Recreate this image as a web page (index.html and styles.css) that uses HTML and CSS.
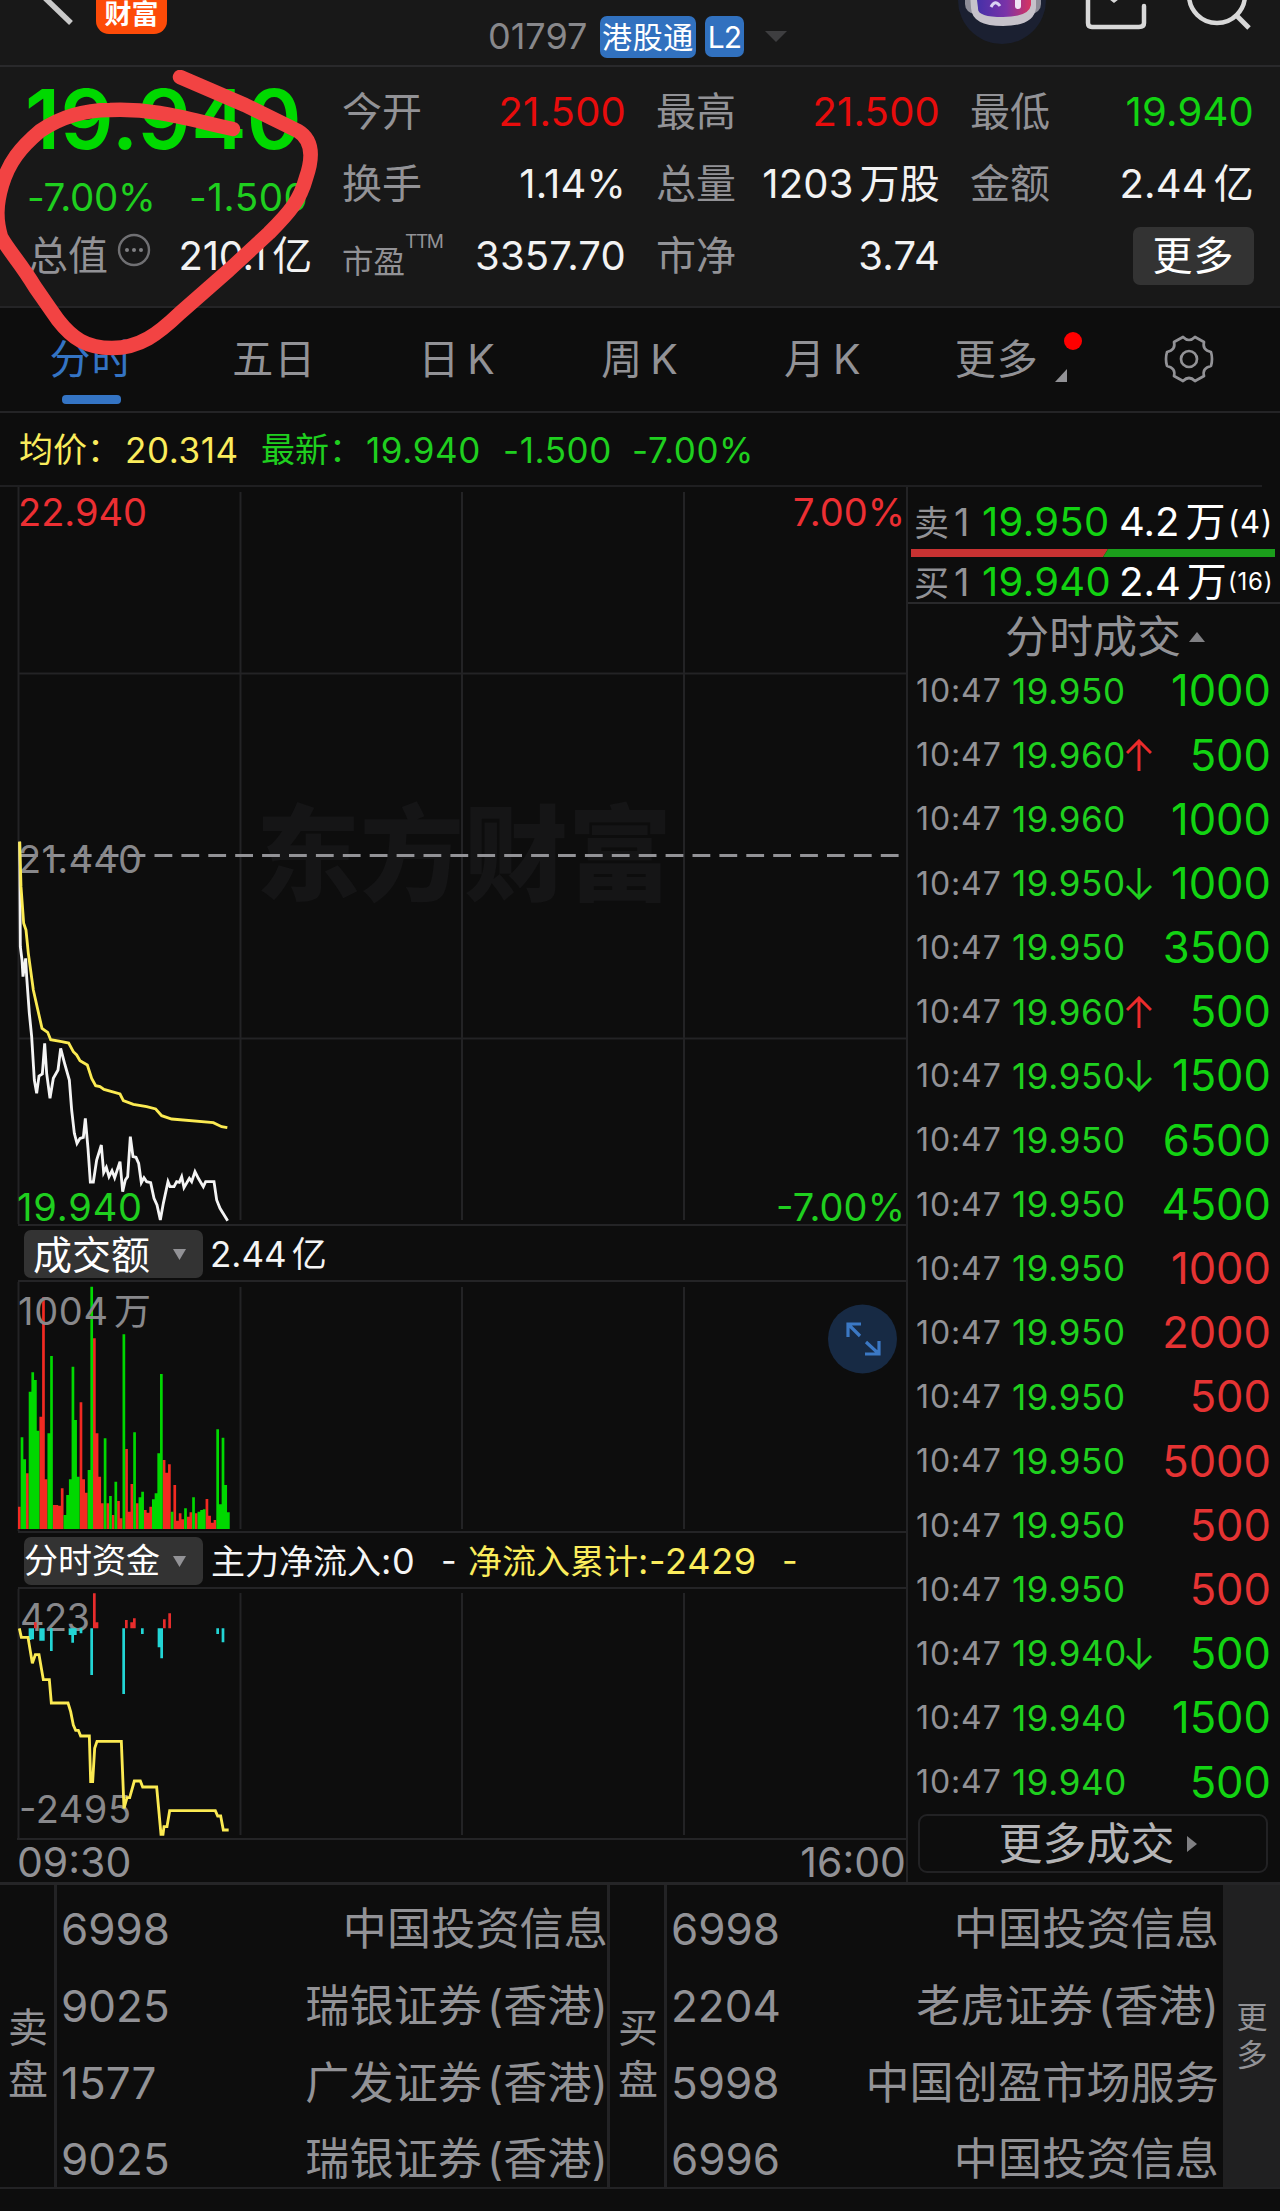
FILE: index.html
```html
<!DOCTYPE html>
<html lang="zh-CN">
<head>
<meta charset="utf-8">
<title>01797 分时</title>
<link rel="stylesheet" href="styles.css">
</head>
<body>
<div class="page">
  <header class="header">
    <svg class="back" width="96" height="66" viewBox="0 0 96 66"><path d="M45-2 71 23" stroke="#c9c9c9" stroke-width="5.5" fill="none"/></svg>
    <div class="logo">财富</div>
    <div class="code">01797</div>
    <div class="badge badge-hk">港股通</div>
    <div class="badge badge-l2">L2</div>
    <svg class="caret" width="22" height="11" viewBox="0 0 22 11"><path d="M0 0H22L11 11Z" fill="#3e3e40"/></svg>
    <svg class="tools" width="330" height="66" viewBox="950 0 330 66">
      <defs><linearGradient id="visor" x1="0" x2="1"><stop offset="0" stop-color="#4330a8"/><stop offset=".55" stop-color="#7a33a8"/><stop offset="1" stop-color="#d83460"/></linearGradient></defs>
      <circle cx="1002" cy="0" r="44" fill="#1b2031"/>
      <rect x="965" y="-14" width="76" height="28" rx="10" fill="#8d8d98"/>
      <path d="M970-8H1036V8Q1034 26 1003 26T971 8Z" fill="#c6c2ca"/>
      <path d="M976-8H1031V5Q1029 17 1003 17T978 8Z" fill="url(#visor)"/>
      <path d="M991 7Q995-1 1000 6" stroke="#d9d4f4" stroke-width="3" fill="none"/>
      <path d="M1018-2V6" stroke="#efe4f4" stroke-width="6" stroke-linecap="round"/>
      <path d="M1088-2V23Q1088 27 1092 27H1139Q1144 27 1144 23V6" stroke="#d8d8d8" stroke-width="4.5" stroke-linecap="round" fill="none"/>
      <path d="M1110-2 1114 1 1118-2" stroke="#d8d8d8" stroke-width="3" fill="none"/>
      <circle cx="1217" cy="-5" r="28" stroke="#d8d8d8" stroke-width="4.5" fill="none"/>
      <path d="M1236 15 1249 28" stroke="#d8d8d8" stroke-width="5"/>
    </svg>
  </header>

  <section class="quote">
    <div class="quote-main">
      <div class="last">19.940</div>
      <div class="change"><span>-7.00%</span><span>-1.500</span></div>
      <div class="cap">
        <span class="label">总值</span>
        <svg width="34" height="34" viewBox="0 0 34 34"><circle cx="17" cy="17" r="15" fill="none" stroke="#707073" stroke-width="2.4"/><g fill="#808083"><circle cx="10" cy="17" r="2"/><circle cx="17" cy="17" r="2"/><circle cx="24" cy="17" r="2"/></g></svg>
        <span class="value">210.1<i></i>亿</span>
      </div>
    </div>
    <dl class="stats">
      <div><dt>今开</dt><dd class="red">21.500</dd></div>
      <div><dt>最高</dt><dd class="red">21.500</dd></div>
      <div><dt>最低</dt><dd class="green">19.940</dd></div>
      <div><dt>换手</dt><dd>1.14%</dd></div>
      <div><dt>总量</dt><dd>1203<i></i>万股</dd></div>
      <div><dt>金额</dt><dd>2.44<i></i>亿</dd></div>
      <div><dt class="pe">市盈<sup>TTM</sup></dt><dd>3357.70</dd></div>
      <div><dt>市净</dt><dd>3.74</dd></div>
      <div class="more-cell"><button class="more">更多</button></div>
    </dl>
    <svg class="scribble" width="330" height="300" viewBox="0 70 330 300"><path d="M180 77 L245 105 298 131C313 140 313 158 306 178C300 200 290 212 269 233L229 270 180 313C158 334 140 348 112 348C86 348 72 338 58 320C48 306 42 297 35 287C20 262 8 250 1 237C-4 220-4 205 2 185C9 162 20 148 40 131C62 116 84 110 110 110C158 108 190 120 233 129" fill="none" stroke="#f24343" stroke-width="14.5" stroke-linecap="round" stroke-linejoin="round"/></svg>
  </section>

  <nav class="tabs">
    <a class="active">分时</a><a>五日</a><a>日<i></i>K</a><a>周<i></i>K</a><a>月<i></i>K</a>
    <a class="tab-more">更多<svg width="44" height="54" viewBox="0 0 44 54"><circle cx="34" cy="9" r="9" fill="#f00"/><path d="M28 37V50H16Z" fill="#929296"/></svg></a>
    <a><svg width="52" height="52" viewBox="0 0 52 52" fill="none" stroke="#929296" stroke-width="2.7" stroke-linejoin="round"><circle cx="26" cy="26" r="8"/><path d="M20 4Q26 10 32 4L41 9Q39 17 48 19Q50 26 48 33Q39 35 41 43L32 48Q26 42 20 48L11 43Q13 35 4 33Q2 26 4 19Q13 17 11 9Z"/></svg></a>
  </nav>

  <div class="summary"><span class="avg">均价：</span><span class="avg n">20.314</span><span>最新：</span><span class="n">19.940</span><span class="n">-1.500</span><span class="n">-7.00%</span></div>

  <main class="board">
    <div class="charts">
      <svg class="chart" width="906" height="737" viewBox="0 487 906 737">
        <text class="mark" x="256" y="893" textLength="416">东方财富</text>
        <g class="grid">
          <path d="M18.5 487V1224M240.5 492V1220M462 492V1220M684 492V1220" />
          <path d="M18 673.5H906M18 1038.5H906" stroke-width="2"/>
        </g>
        <path d="M20 855.5H901" stroke="#929296" stroke-width="3" stroke-dasharray="17.8 9.1"/>
        <g class="labels">
          <text class="t-red" x="18" y="526" textLength="129">22.940</text>
          <text class="t-red" x="793" y="526" textLength="112">7.00%</text>
          <text x="18" y="873" textLength="124">21.440</text>
          <text class="t-green" x="17" y="1221" textLength="125">19.940</text>
          <text class="t-green" x="776" y="1221" textLength="129">-7.00%</text>
        </g>
        <g transform="translate(0 820) scale(.33333)" fill="none" stroke-width="8.5" stroke-linejoin="miter">
          <polyline stroke="#f4f4f4" points="59,65 61,380 66,420 69,470 77,415 80,470 88,580 95,650 103,780 110,820 117,768 127,762 134,670 140,760 150,835 160,775 174,750 182,685 195,735 208,780 215,870 223,940 231,970 240,955 250,952 256,895 264,985 271,1086 280,1086 290,1020 304,975 311,1058 319,1042 327,1070 336,1052 344,1073 360,1025 368,1115 376,1080 383,1070 391,950 399,1010 408,1012 416,1030 424,1088 432,1073 440,1085 452,1088 462,1135 471,1155 481,1200 490,1150 504,1085 510,1100 522,1100 530,1085 538,1087 545,1070 552,1103 568,1075 575,1085 585,1055 595,1075 610,1100 617,1085 642,1085 650,1140 660,1165 683,1202"/>
          <polyline stroke="#fbea52" points="59,65 63,200 71,310 78,330 85,400 100,510 126,625 143,637 152,659 185,665 206,669 220,695 230,705 240,722 262,735 275,775 287,797 300,800 312,808 360,822 370,842 400,853 440,860 467,867 485,887 515,897 640,908 665,920 682,923"/>
        </g>
      </svg>
      <div class="indicator"><button class="pick">成交额<svg width="13" height="11" viewBox="0 0 13 11"><path d="M0 0H13L6.5 11Z"/></svg></button><span class="amount">2.44<i></i>亿</span></div>
      <svg class="chart" width="906" height="249" viewBox="0 1282 906 249">
        <g class="grid"><path d="M18.5 1282V1531M240.5 1287V1529M462 1287V1529M684 1287V1529"/></g>
        <g id="volume" transform="translate(0 1210) scale(.33333)" stroke-width="8.1" fill="none"></g>
        <g class="labels"><text x="18" y="1325" textLength="90">1004</text><text x="114" y="1325" font-size="37">万</text></g>
        <circle cx="862.5" cy="1339" r="34.5" fill="#172a44"/>
        <path d="M848 1337V1324H861M848 1324 860 1336M879 1341V1354H865M879 1354 866 1342" stroke="#3b78c4" stroke-width="3.2" fill="none"/>
      </svg>
      <div class="indicator flow-head"><button class="pick">分时资金<svg width="13" height="11" viewBox="0 0 13 11"><path d="M0 0H13L6.5 11Z"/></svg></button><span class="f1">主力净流入<b>:0</b></span><span class="f2">-</span><span class="f3">净流入累计<b>:-2429</b></span><span class="f4">-</span></div>
      <svg class="chart" width="906" height="249" viewBox="0 1589 906 249">
        <g class="grid"><path d="M18.5 1589V1838M240.5 1593V1835M462 1593V1835M684 1593V1835"/></g>
        <g class="labels"><text x="20" y="1631" textLength="70">423</text><text x="19" y="1823" textLength="112">-2495</text></g>
        <g transform="translate(0 1540) scale(.33333)" fill="none">
          <g id="flow" stroke-width="8.1"></g>
          <polyline stroke="#fbea52" stroke-width="8.5" points="58,265 64,292 84,292 97,370 106,344 117,344 130,419 148,419 154,489 204,489 212,515 220,555 227,571 235,571 242,588 268,588 272,725 278,725 284,625 291,604 364,604 372,805 381,773 389,773 403,723 421,723 428,741 470,741 483,883 489,883 492,860 501,860 509,812 646,812 653,828 662,828 670,870 686,870"/>
        </g>
      </svg>
      <div class="times"><span>09:30</span><span>16:00</span></div>
    </div>

    <aside class="trades">
      <div class="level"><span class="side">卖<b>1</b></span><span class="lp">19.950</span><span class="lv">4.2<i></i>万</span><span class="lc">(4)</span></div>
      <svg class="ratio" width="364" height="8" viewBox="0 0 364 8"><path d="M0 0H197L192 8H0Z" fill="#c93232"/><path d="M197 0H364V8H192Z" fill="#1b9e1b"/></svg>
      <div class="level buy"><span class="side">买<b>1</b></span><span class="lp">19.940</span><span class="lv">2.4<i></i>万</span><span class="lc small">(16)</span></div>
      <div class="trades-title">分时成交<svg width="16" height="10" viewBox="0 0 16 10"><path d="M8 0 16 10H0Z" fill="#808083"/></svg></div>
      <div class="ticks" id="ticks"></div>
      <button class="all-trades">更多成交<svg width="10" height="16" viewBox="0 0 10 16"><path d="M0 0 10 8 0 16Z" fill="#808083"/></svg></button>
    </aside>
  </main>

  <section class="brokers">
    <div class="side-name">卖<br>盘</div>
    <div class="queue">
      <div><span>6998</span><em>中国投资信息</em></div>
      <div><span>9025</span><em>瑞银证券<i></i>(香港)</em></div>
      <div><span>1577</span><em>广发证券<i></i>(香港)</em></div>
      <div><span>9025</span><em>瑞银证券<i></i>(香港)</em></div>
    </div>
    <div class="side-name">买<br>盘</div>
    <div class="queue bid">
      <div><span>6998</span><em>中国投资信息</em></div>
      <div><span>2204</span><em>老虎证券<i></i>(香港)</em></div>
      <div><span>5998</span><em>中国创盈市场服务</em></div>
      <div><span>6996</span><em>中国投资信息</em></div>
    </div>
    <div class="brokers-more">更<br>多</div>
  </section>
</div>
<script src="app.js"></script>
</body>
</html>
```
FILE: app.js
```js
// One bar per minute: colour and top edge, with the baseline at 957.
const volume = 'r890 g682 g748 r790 g545 g487 g510 g662 r620 r262 r808 g670 g438 r885 r885 r887 r835 g915 g855 g808 g470 g630 g800 r577 r808 r848 g780 g230 r385 r670 r800 r880 g685 r880 g858 r915 g815 r873 r925 g373 r717 r905 r822 g667 r880 g862 g845 r900 r908 r890 g868 g850 g730 g492 r750 r788 r763 g905 r825 r932 r910 r928 g895 r920 r907 g862 r910 g905 g900 g898 r867 r917 r938 r930 g658 g883 g683 g825 g907'.split(' ');
const paths = { r: '', g: '' };
volume.forEach((bar, i) => {
  const x = (58 + i * 8.04).toFixed(1);
  paths[bar[0]] += `M${x} 957V${bar.slice(1)}`;
});
document.getElementById('volume').innerHTML =
  `<path stroke="#f22a22" d="${paths.r}"/><path stroke="#00d800" d="${paths.g}"/>`;

const outflow = [[90, 300], [98, 298], [122, 302], [130, 302], [154, 333], [210, 285], [218, 308], [226, 285], [243, 280], [275, 405], [371, 462], [427, 282], [477, 322], [485, 355], [653, 282], [669, 307]];
const inflow = [[106, 247], [283, 160], [291, 247], [379, 240], [395, 247], [403, 235], [493, 238], [509, 220]];
const toPath = bars => bars.map(([x, y]) => `M${x} 265V${y}`).join('');
document.getElementById('flow').innerHTML =
  `<path stroke="#22d5d5" d="${toPath(outflow)}"/><path stroke="#e82c2c" d="${toPath(inflow)}"/>`;

// Price, move, volume, volume colour.
const ticks = [
  ['19.950', '', 1000, 'green'], ['19.960', 'up', 500, 'green'], ['19.960', '', 1000, 'green'],
  ['19.950', 'down', 1000, 'green'], ['19.950', '', 3500, 'green'], ['19.960', 'up', 500, 'green'],
  ['19.950', 'down', 1500, 'green'], ['19.950', '', 6500, 'green'], ['19.950', '', 4500, 'green'],
  ['19.950', '', 1000, 'red'], ['19.950', '', 2000, 'red'], ['19.950', '', 500, 'red'],
  ['19.950', '', 5000, 'red'], ['19.950', '', 500, 'red'], ['19.950', '', 500, 'red'],
  ['19.940', 'down', 500, 'green'], ['19.940', '', 1500, 'green'], ['19.940', '', 500, 'green']
];
const arrows = {
  '': '',
  up: '<path d="M13 32V2M1 14 13 2 25 14" stroke="#ec2b2b"/>',
  down: '<path d="M13 0V30M1 18 13 30 25 18" stroke="#1fd01f"/>'
};
document.getElementById('ticks').innerHTML = ticks.map(([price, move, size, colour]) =>
  `<div class="tick"><span class="time">10:47</span><span class="price">${price}</span>` +
  `<svg width="26" height="32" viewBox="0 0 26 32" fill="none" stroke-width="3">${arrows[move]}</svg>` +
  `<span class="size ${colour}">${size}</span></div>`).join('');
```
FILE: styles.css
```css
* { box-sizing: border-box; }
body { margin: 0; background: #0d0d0d; }
.page {
  width: 1280px; height: 2211px; overflow: hidden; background: #0d0d0d; color: #929296;
  font-family: Inter, "Noto Sans CJK SC", sans-serif; font-size: 40px; line-height: 1; white-space: nowrap;
}
i { display: inline-block; width: 6px; }
em { font-style: normal; }
b { font-weight: 400; }
button { border: 0; padding: 0; font: inherit; color: #fff; }
svg { display: block; flex: none; }

.header { height: 67px; display: flex; align-items: flex-start; background: #181818; border-bottom: 2px solid #29292b; }
.logo { width: 71px; height: 34px; border-radius: 0 0 13px 13px; background: #fd4b08; color: #fff; font-size: 27px; font-weight: 700; line-height: 29px; text-align: center; }
.code { width: 112px; margin: 18px 0 0 320px; padding-left: 1px; font-size: 36px; line-height: 36px; color: #88888b; }
.badge { margin-top: 16px; height: 42px; line-height: 42px; border-radius: 7px; background: #3171bf; color: #fff; text-align: center; font-size: 30px; }
.badge-hk { width: 96px; margin-left: 1px; letter-spacing: .6px; }
.badge-l2 { width: 39px; height: 41px; margin-left: 9px; font-size: 30px; letter-spacing: -1px; }
.caret { margin: 31px 0 0 21px; }
.tools { margin-left: auto; }

.quote { height: 241px; display: flex; position: relative; background: #181818; border-bottom: 2px solid #242426; }
.quote-main { width: 342px; padding-left: 28px; }
.last { margin: 10px 0 0 -3px; height: 84px; line-height: 84px; font-size: 83px; font-weight: 600; letter-spacing: .4px; color: #00d900; }
.change { display: flex; height: 72px; align-items: center; color: #1fcf1f; font-size: 38.5px; }
.change span:first-child { width: 162px; letter-spacing: -.3px; margin-left: -1px; }
.change span:last-child { letter-spacing: .6px; }
.cap { display: flex; align-items: center; height: 46px; }
.cap svg { margin: -12px 0 0 7px; }
.cap .label { width: 82px; }
.cap .value { text-align: right; color: #f2f2f2; margin-left: auto; margin-right: 30px; letter-spacing: -.3px; }
.stats { margin: 9px 0 0; display: grid; grid-template-columns: 284px 284px 284px; column-gap: 30px; grid-auto-rows: 72px; width: 912px; }
.stats > div { display: flex; align-items: center; justify-content: space-between; }
.stats dd { margin: 0; color: #f2f2f2; letter-spacing: .2px; }
.stats .red { color: #e80c0c; }
.stats .green { color: #12d312; }
.stats .pe { font-size: 31.5px; padding-top: 12px; display: flex; }
.pe sup { font-size: 19px; line-height: 19px; margin-top: -14px; vertical-align: top; letter-spacing: -1.4px; }
.stats .more-cell { justify-content: flex-end; }
.more { width: 121px; height: 58px; background: #333; border-radius: 7px; letter-spacing: 1px; }
.scribble { position: absolute; left: 0; top: 3px; z-index: 2; }

.tabs { height: 105px; display: grid; grid-template-columns: repeat(7, 1fr); border-bottom: 2px solid #242426; font-size: 41px; letter-spacing: 1px; }
.tabs a { display: flex; align-items: center; justify-content: center; height: 102px; position: relative; }
.tabs i { width: 7px; }
.tabs .active { color: #3474c4; }
.active::after { content: ""; position: absolute; left: 62px; top: 87px; width: 59px; height: 9px; border-radius: 4px; background: #3474c4; }
.tabs .tab-more { padding-left: 26px; }

.summary { height: 74px; margin-right: 18px; display: grid; grid-template-columns: 106px 136px 105px 137px 129px auto; align-items: center; padding: 2px 0 0 19px; border-bottom: 2px solid #1f1f21; font-size: 34px; color: #1fcf1f; }
.summary .n { font-size: 35px; letter-spacing: .6px; }
.summary .avg { color: #faec5c; }

.board { display: flex; height: 1395px; }
.charts { width: 908px; border-right: 2px solid #232325; }
.chart { overflow: hidden; }
.grid { fill: none; stroke: #232325; stroke-width: 2; }
.labels { fill: #88888b; font-size: 38px; }
.t-red { fill: #ec2f33; }
.t-green { fill: #1fcf1f; }
.mark { fill: #151516; font-size: 104px; font-weight: 900; }
.indicator { height: 58px; margin-left: 18px; padding: 2px 0 0 6px; display: flex; align-items: center; border-top: 2px solid #242426; border-bottom: 2px solid #242426; color: #f4f4f4; font-size: 35px; }
.indicator i { width: 5px; }
.pick { width: 179px; height: 48px; padding: 0 17px 0 9px; display: flex; align-items: center; justify-content: space-between; border-radius: 7px; background: #333; font-size: 39px; }
.pick path { fill: #929296; }
.amount { margin-left: 7px; }
.flow-head { font-size: 34px; }
.flow-head .pick { padding-left: 0; font-size: 34px; }
.flow-head b { font-size: 36px; letter-spacing: .7px; }
.f1 { width: 230px; margin-left: 8px; }
.f2 { width: 27px; }
.f3 { width: 314px; color: #faec5c; }
.f4 { color: #faec5c; }
.times { height: 45px; margin-left: 17px; display: flex; justify-content: space-between; align-items: center; padding-top: 1px; border-top: 2px solid #242426; font-size: 41px; }

.trades { width: 372px; }
.level { height: 62px; padding: 7px 0 0 6px; display: grid; grid-template-columns: 68px 137px 109px auto; align-items: center; color: #fff; }
.level .side { color: #929296; font-size: 35px; }
.side b { font-size: 38px; margin-left: 5px; }
.level .lp { color: #12d312; letter-spacing: .3px; }
.level .lc { font-size: 31px; letter-spacing: .8px; }
.level .small { font-size: 24px; }
.ratio { margin-left: 3px; }
.level.buy { height: 47px; padding-top: 4px; border-bottom: 2px solid #29292b; }
.trades-title { height: 54px; padding: 12px 0 0 97px; display: flex; align-items: center; gap: 8px; font-size: 44px; }
.ticks { height: 1156px; padding-top: 1px; display: grid; grid-template-rows: repeat(18, 64.2px); }
.tick { display: grid; grid-template-columns: 96px 114px 25px 120px; padding-left: 8px; align-items: center; }
.tick .time { font-size: 32px; letter-spacing: .9px; }
.tick .price { font-size: 35px; letter-spacing: .6px; color: #1fd01f; }
.tick .size { font-size: 43.5px; text-align: right; }
.tick .green { color: #12d312; }
.tick .red { color: #e53333; }
.all-trades { width: 350px; height: 59px; margin: 0 0 0 10px; padding-left: 9px; display: flex; align-items: center; justify-content: center; gap: 12px; background: none; border: 2px solid #222224; border-radius: 9px; color: #b4b4b6; font-size: 44px; }

.brokers { height: 307px; display: flex; border-top: 3px solid #252527; border-bottom: 2px solid #232325; font-size: 44px; }
.side-name { width: 57px; padding: 36px 0 0 2px; display: flex; align-items: center; justify-content: center; border-right: 3px solid #232325; font-size: 40px; line-height: 52px; }
.queue { width: 553px; padding: 6px 0 0 4px; border-right: 3px solid #232325; display: grid; grid-template-rows: repeat(4, 76.7px); height: 302px; }
.queue > div { display: flex; align-items: center; justify-content: space-between; }
.queue em { margin-right: -1px; letter-spacing: .2px; }
.queue i { width: 5px; }
.queue.bid { width: 556px; padding-right: 5px; border: 0; }
.brokers-more { width: 57px; padding-left: 1px; display: flex; align-items: center; justify-content: center; background: #202021; font-size: 31px; line-height: 38px; }
```
